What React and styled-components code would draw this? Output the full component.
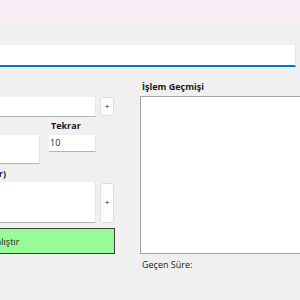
import React from "react";
import styled, { createGlobalStyle } from "styled-components";

const GlobalStyle = createGlobalStyle`
    html, body {
        margin: 0;
        padding: 0;
        background: #f0f0f0;
        overflow: hidden;
    }
    body {
        font-family: "Open Sans", "Noto Sans", "Liberation Sans", sans-serif;
        font-size: 9px;
        color: #1a1a1a;
    }
`;

const Window = styled.div`
    width: 300px;
    height: 300px;
    overflow: hidden;
    background: #f0f0f0;
`;

const TitleBand = styled.div`
    height: 23px;
    background: #f7edf5;
`;

const Form = styled.div`
    margin-left: -120px;
    padding-top: 22px;
`;

const MainInput = styled.div`
    width: 415px;
    height: 20px;
    background: #fff;
    border-right: 1px solid #e4e4e4;
    border-bottom: 2px solid #0078d7;
`;

const Columns = styled.div`
    display: flex;
    margin-top: 13px;
    gap: 25px;
`;

const LeftColumn = styled.div`
    width: 235px;
    padding-top: 17px;
    display: flex;
    flex-direction: column;
`;

const RightColumn = styled.div`
    flex: 1;
    display: flex;
    flex-direction: column;
`;

const Label = styled.div`
    font-weight: 700;
    line-height: 13px;
    height: 13px;
    padding-left: 2px;
    margin-top: ${p => p.$top || 0}px;
    margin-bottom: ${p => p.$gap || 3}px;
    white-space: nowrap;
`;

/* section caption whose closing ")" sits at a fixed column */
const Caption = styled(Label)`
    width: 124px;
    text-align: right;
    direction: rtl;
    unicode-bidi: plaintext;
`;

const Row = styled.div`
    display: flex;
    align-items: flex-start;
    gap: ${p => p.$gap || 4}px;
    margin-top: ${p => p.$top || 0}px;
`;

const Field = styled.div`
    width: ${p => p.$w}px;
    height: ${p => p.$h}px;
    background: #fff;
    border-right: 1px solid #e6e6e6;
    border-bottom: 1px solid #b4b4b4;
    box-sizing: border-box;
    padding: 2px 1px;
    font-size: 9px;
    line-height: 12px;
`;

const PlusButton = styled.button`
    width: 14px;
    height: ${p => p.$h}px;
    margin-top: ${p => p.$top || 0}px;
    padding: 0;
    background: #fdfdfd;
    border: 1px solid #dedede;
    border-radius: 3px;
    font-family: "Liberation Sans", sans-serif;
    font-size: 8px;
    color: #202020;
    line-height: 1;
`;

const FieldGroup = styled.div`
    display: flex;
    flex-direction: column;
    width: ${p => p.$w}px;
`;

const RunButton = styled.button`
    margin-top: 5px;
    width: 235px;
    height: 26px;
    background: #98fb98;
    border: 1px solid #3f3f3f;
    font-family: inherit;
    font-size: 9px;
    color: #1a1a1a;
    padding: 0 0 0 15px;
`;

const ListBox = styled.div`
    height: 156px;
    background: #fff;
    border: 1px solid #a3a3a3;
    margin-right: -20px;
`;

const Status = styled.div`
    margin-top: 5px;
    padding-left: 2px;
    line-height: 12px;
`;

export default function App() {
    return (
        <>
            <GlobalStyle />
            <Window>
                <TitleBand />
                <Form>
                    <MainInput />
                    <Columns>
                        <LeftColumn>
                            <Row>
                                <Field $w={216} $h={20} />
                                <PlusButton $h={19}>+</PlusButton>
                            </Row>
                            <Row $gap={9} $top={2}>
                                <FieldGroup $w={160}>
                                    <Label>Bekleme</Label>
                                    <Field $w={160} $h={29} />
                                </FieldGroup>
                                <FieldGroup $w={47}>
                                    <Label>Tekrar</Label>
                                    <Field $w={47} $h={17}>10</Field>
                                </FieldGroup>
                            </Row>
                            <Caption $gap={2} $top={3}>Komut Listesi (satırlar)</Caption>
                            <Row>
                                <Field $w={216} $h={41} />
                                <PlusButton $h={40} $top={1}>+</PlusButton>
                            </Row>
                            <RunButton>Çalıştır</RunButton>
                        </LeftColumn>
                        <RightColumn>
                            <Label $gap={3}>İşlem Geçmişi</Label>
                            <ListBox />
                            <Status>Geçen Süre:</Status>
                        </RightColumn>
                    </Columns>
                </Form>
            </Window>
        </>
    );
}
